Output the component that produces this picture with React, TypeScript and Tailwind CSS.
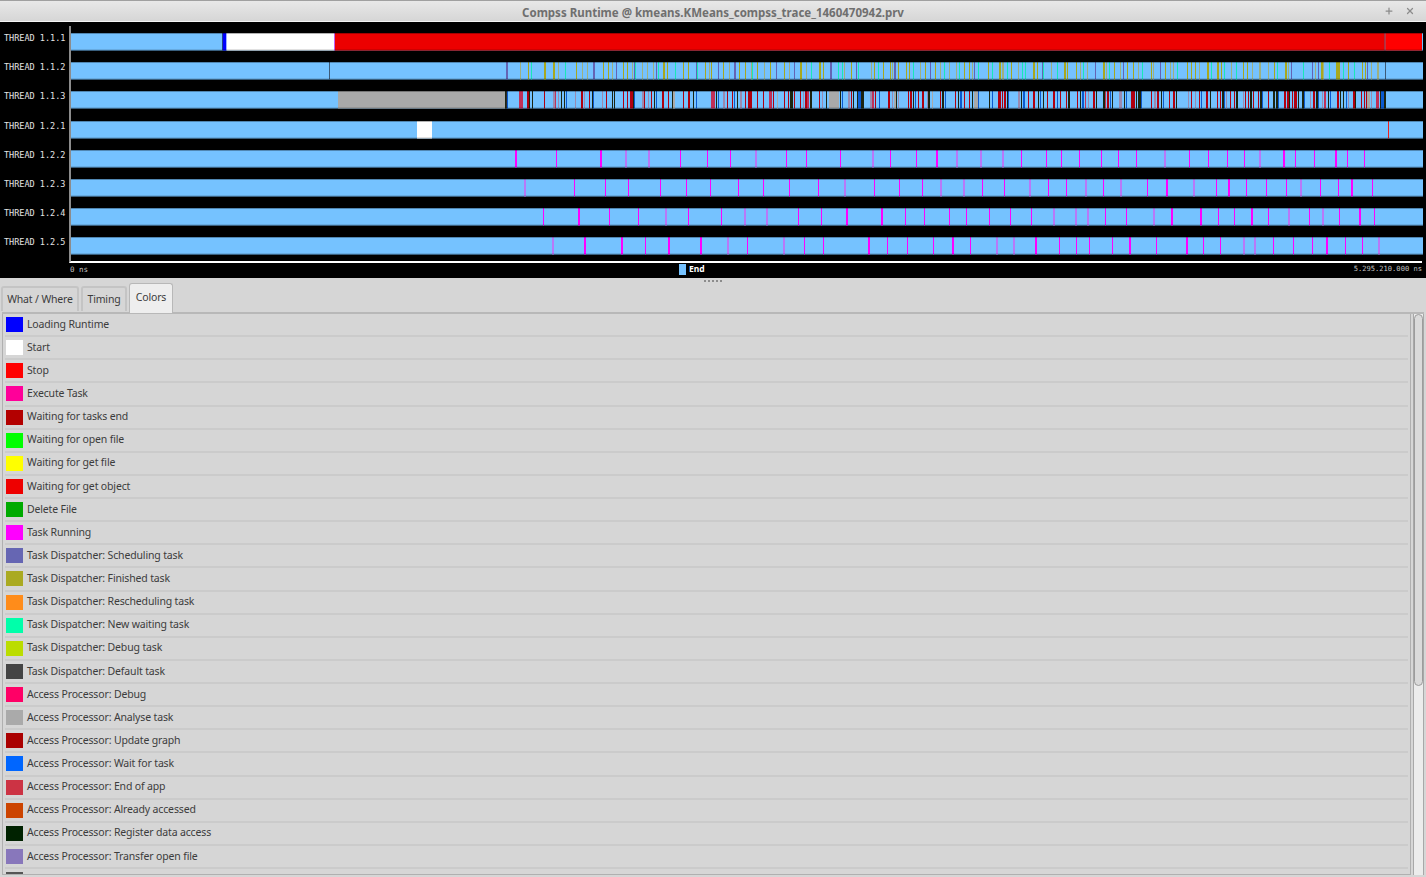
import { Plus, X } from "lucide-react";

const BLUE = "#75c2ff";

const dense: Record<string, string> = {
  P: "#6464b4",
  Y: "#a8a81e",
  S: "#9fb080",
  C: "#19e8b8",
  R: "#b00010",
  K: "#1c2410",
  B: "#0a5ad0",
  M: "#c03058",
  L: "#9a8ab0",
  G: "#a9a9a9",
};

const sched = [
  [505, "3P6 45S2 68Y3 78C2 118Y5 145Y4 158S5 180C2 212Y3 232S2 245S3 265P4 295Y3 309Y2 322S2 332P2 354Y4 366Y3 380S2 387P5 391C2 412S2 425S2 445S2 452P5 458C2 475Y4 487Y3 511C2 534Y4 548Y3 572P4 577C2 601Y3 612S2 618Y2 638P2 653Y5 672S2 688P5 703Y3 720Y4 737S3 742C2 756Y2 778S2 795Y2 814P3 838Y3 852S4 866P2 886Y5"],
  [805, "2S3 18C2 43Y4 55Y3 76P5 100C2 110C2 118S3 137Y3 152P5 160C2 197S5 207Y3 220C2 233Y3 255Y4 262S2 268P4 280Y2 303Y3 312Y2 324C2 344S2 360Y2 374P3 390Y2 405S2 418C3 432S2 452S5 463C2 478Y2 493Y3 500S2 506P5 520C2 550Y2 560C2 583Y6 592S5 605C2 618Y3 640S2 652C2 660C2 685Y4 695Y2 710P3 715C2 738S2 755C2 778Y6 785Y4 812Y3 825S4 835C2 845S3 870P2 895Y5"],
  [1105, "3S3 13C2 28Y3 45S2 55P2 65Y4 85Y3 100S2 110C3 138Y4 143S5 165P4 180Y3 195S2 205S2 217C3 245Y2 258Y3 270Y3 282S2 307Y4 317C2 337Y5 347Y3 358C2 378S3 392C2 414Y3 425Y3 440S2 463S5 490S2 508Y2 517C2 541Y4 550S3 557P2 595C3 622P3 630S4 638P2 648Y6 655S3 673C2 694Y12 713C2 730Y2 748C2 770Y3 780Y3 787P3 798S2 817S5 841P3"],
] as const;

const access = [
  [505, "0K3 6B2 43M10 67R4 73K3 80K3 117R3 145L4 150M3 160L3 168K3 176K3 182B2 210L4 227R6 237L2 252R3 260K3 265B3 292L3 303R4 320K3 328K3 355R3 365R4 374R10 384K3 388B3 412L5 418R3 430L2 438R4 448K3 452B4 472R4 490R3 500K3 505G5 535R3 550R4 565K3 572B4 617M14 632K4 640B2 655L4 665R2 680R4 688B3 695K3 705L6 720R3 730R10 755R4 775R2 792M10 804R2 815G4 838R3 848R4 856K8 866R2 884R3 895L3"],
  [805, "0R5 7M4 14K6 42R3 50L5 62K3 72G30 105K3 112B3 130L5 138R3 145K3 155K3 160B8 168K9 196L5 200M8 210R3 222B3 250R6 260L3 268G4 272K3 280L2 310R3 316R5 324K3 330B4 338R3 352R4 365L4 370K6 380G2 405R3 412K4 420B3 450R4 458K3 465B6 478R3 492R4 502K3 508G10 520B2 552K3 560B3 580R7 592R3 598R4 606K3 610B2 640L4 648K3 655B4 670R2 685R5 700K3 706B3 715K2 725R4 745R6 755B2 765R2 783R4 790K5 815R3 825K3 830B8 840M3 850L3 865R4 872K2 895K5"],
  [1105, "0M4 5R8 14B3 22K2 42L8 57K3 62B2 78R12 92K3 99K8 108B2 138R3 148L4 156R5 168K3 173B2 192R3 205R4 212K5 248L4 258R3 270L3 281R3 287B2 304R5 315K3 337R3 345R4 352K4 358B2 362L3 375R2 388R3 393K5 415L3 420R3 428R2 436K4 445R3 458R3 465K6 472B2 488R3 505K4 514K5 520B2 538R4 545R6 552K3 560R3 568R8 578K3 592K6 598B2 615L4 625R4 633K5 640B2 650L4 656M8 668K3 676B3 697R4 705K3 715K3 722B3 728L2 745R4 751K2 768R3 776R3 782R2 786G10 798L4 814M8 824K3 828B9 838K5"],
] as const;

// x positions on the page; t = thick, s = faded
const running = [
  "516.3t 556.3 601.3t 625.7s 648.7s 680.7 707 730.3 755.3s 786.3 806.7 840 872.3s 890 916.3 936.7t 956.7s 980s 1002.3s 1021.3 1046.3 1061.3 1079.3 1101.3 1118.3 1136.3 1164.3s 1189.3 1208.3 1227 1244.3 1259.3s 1284t 1295.3 1314.3 1336t 1347.3 1364.3",
  "524.3s 574.3 605.3 628.3 660 686.3 710.3 738.3 763.3 789.3 818 844s 874 899.3 922.3 940s 963s 982.3 1004.3 1029.3s 1048.3 1066.3 1085.3s 1103.3 1120s 1147.7 1167t 1193s 1216.3 1228.7t 1246.3 1266.3 1286.3 1300s 1320.3 1338 1352t 1372",
  "543 578.7t 609 638 665.7s 688.7 721.3 744s 766.7s 798.3 821.3 847t 882t 905.3 924.7 949.7 966.3 989.3 1010.3 1031.3 1053s 1075s 1087s 1105.3 1126 1153s 1172.3t 1200.7t 1218.3 1234.3 1251.7t 1268.3 1288s 1309.3 1322s 1339.3 1360.3t 1374",
  "552.3s 585t 621.7t 645.3 669t 701t 727s 747.3 783.3s 804.3 823.3 868.7t 887.3 907.3 933.3 953.3t 970.3 996s 1013s 1036.3t 1059.3 1076.3 1089.7 1112.3 1130t 1156.3 1186.7t 1203.3 1220.3 1243s 1254s 1273.3 1293.3 1312.3 1326.7t 1345.3 1362.3 1378s",
];

function Bar({ children }: { children?: React.ReactNode }) {
  return (
    <svg width="1352" height="17.6" className="block shrink-0 overflow-visible">
      <rect x="0" y="0" width="1352" height="17.6" fill={BLUE} />
      {children}
      <rect x="0" y="0" width="1352" height="1" fill="#000" opacity="0.3" />
      <rect x="0" y="16.6" width="1352" height="1" fill="#000" opacity="0.3" />
    </svg>
  );
}

const Seg = ({ from, to, color }: { from: number; to: number; color: string }) => (
  <rect x={from - 71} y="0" width={to - from} height="17.6" fill={color} />
);

function DenseTicks({ data }: { data: readonly (readonly [number, string])[] }) {
  return (
    <>
      {data.flatMap(([base, list]) =>
        list.split(" ").map((item) => {
          const m = item.match(/^(\d+)([A-Z])(\d+)$/)!;
          const from = Math.round(base + Number(m[1]) / 3);
          const to = Math.max(from + 1, Math.round(base + (Number(m[1]) + Number(m[3])) / 3));
          return <Seg key={base + item} from={from} to={to} color={dense[m[2]]} />;
        })
      )}
    </>
  );
}

function RunTicks({ list }: { list: string }) {
  return (
    <>
      {list.split(" ").map((item) => {
        const x = parseFloat(item);
        const thick = item.endsWith("t");
        const soft = item.endsWith("s");
        const from = thick ? Math.round(x - 1) : Math.floor(x);
        return (
          <Seg
            key={item}
            from={from}
            to={from + (thick || soft ? 2 : 1)}
            color={soft ? "#b878f8" : "#ff00ff"}
          />
        );
      })}
    </>
  );
}

const threads = ["1.1.1", "1.1.2", "1.1.3", "1.2.1", "1.2.2", "1.2.3", "1.2.4", "1.2.5"];

const legend: [string, string][] = [
  ["#0000ff", "Loading Runtime"],
  ["#ffffff", "Start"],
  ["#ff0000", "Stop"],
  ["#ff0099", "Execute Task"],
  ["#b30000", "Waiting for tasks end"],
  ["#00ff00", "Waiting for open file"],
  ["#ffff00", "Waiting for get file"],
  ["#ee0000", "Waiting for get object"],
  ["#00aa00", "Delete File"],
  ["#ff00ff", "Task Running"],
  ["#6666b3", "Task Dispatcher: Scheduling task"],
  ["#aaaa22", "Task Dispatcher: Finished task"],
  ["#ff8c1a", "Task Dispatcher: Rescheduling task"],
  ["#00ffaa", "Task Dispatcher: New waiting task"],
  ["#bbdd00", "Task Dispatcher: Debug task"],
  ["#444444", "Task Dispatcher: Default task"],
  ["#ff0066", "Access Processor: Debug"],
  ["#aaaaaa", "Access Processor: Analyse task"],
  ["#aa0000", "Access Processor: Update graph"],
  ["#0066ff", "Access Processor: Wait for task"],
  ["#cc3344", "Access Processor: End of app"],
  ["#cc4400", "Access Processor: Already accessed"],
  ["#002200", "Access Processor: Register data access"],
  ["#8877bb", "Access Processor: Transfer open file"],
  ["#555555", ""],
];

export default function App() {
  return (
    <div className="w-[1426px] h-[877px] overflow-hidden flex flex-col bg-[#d6d6d6] font-['Noto_Sans',sans-serif]">
      {/* Window title */}
      <div className="h-[22px] shrink-0 relative flex items-center justify-center pt-[3px] border-t border-[#a0a0a0] border-b border-b-[#f4f4f4] bg-gradient-to-b from-[#e8e8e8] to-[#d6d6d6]">
        <span className="text-[11.5px] font-bold text-[#6f6f6f]">
          Compss Runtime @ kmeans.KMeans_compss_trace_1460470942.prv
        </span>
        <div className="absolute right-[11px] top-[5px] flex gap-[11px] text-[#8c8c8c]">
          <Plus size={10} strokeWidth={3} />
          <X size={10} strokeWidth={3} />
        </div>
      </div>

      {/* Timeline */}
      <div className="h-[256px] shrink-0 bg-black flex flex-col font-['DejaVu_Sans_Mono',monospace]">
        <div className="h-[241px] shrink-0 pt-[4px] flex">
          <div className="w-[69px] pt-[7px] flex flex-col gap-[11.6px] text-[8.5px] text-[#e4e4e4]">
            {threads.map((t) => (
              <div key={t} className="h-[17.6px] pl-[4px] leading-[10px] whitespace-pre">
                THREAD {t}
              </div>
            ))}
          </div>
          <div className="w-[1353px] pt-[7px] flex flex-col gap-[11.6px] border-l-2 border-l-[#8c8c8c] border-b-2 border-b-white">
            <Bar>
              <Seg from={222} to={223} color="#24408c" />
              <Seg from={223} to={226.5} color="#0000ff" />
              <Seg from={226.5} to={334} color="#ffffff" />
              <Seg from={334} to={335} color="#c060f0" />
              <Seg from={335} to={1384.5} color="#ec0000" />
              <Seg from={1384.5} to={1385.5} color="#a00000" />
              <Seg from={1385.5} to={1422} color="#ff0000" />
            </Bar>
            <Bar>
              <Seg from={329} to={330} color="#3c5a78" />
              <DenseTicks data={sched} />
              <Seg from={1385} to={1386} color="#3c5a78" />
            </Bar>
            <Bar>
              <Seg from={338} to={505.5} color="#a9a9a9" />
              <Seg from={505.5} to={507} color="#2a2a2a" />
              <DenseTicks data={access} />
            </Bar>
            <Bar>
              <Seg from={417} to={432} color="#ffffff" />
              <Seg from={1388} to={1389} color="#ee2020" />
            </Bar>
            {running.map((list) => (
              <Bar key={list}>
                <RunTicks list={list} />
              </Bar>
            ))}
          </div>
        </div>
        <div className="flex-1 flex items-center text-[7.1px] text-[#c4c4c4] pb-[3px]">
          <span className="w-[679px] pl-[70px] text-[7.5px]">0 ns</span>
          <span className="w-[7px] h-[11px] bg-[#75c2ff]" />
          <span className="ml-[3px] text-[8.5px] font-bold text-white font-['Noto_Sans',sans-serif]">End</span>
          <span className="ml-auto pr-[4px]">5.295.210.000 ns</span>
        </div>
      </div>

      {/* Splitter */}
      <div className="h-[5px] shrink-0 flex items-center justify-center gap-[2px]">
        {[0, 1, 2, 3, 4].map((i) => (
          <span key={i} className="w-[2px] h-[2px] bg-[#8c8c8c]" />
        ))}
      </div>

      {/* Tabs */}
      <div className="h-[29px] shrink-0 flex items-start pl-[1px] gap-[2px] text-[10.5px] tracking-[-0.15px] text-[#3c3c3c] relative z-10">
        <div className="mt-[3px] h-[25px] w-[78px] flex items-center justify-center border-2 border-b-0 border-[#c4c4c4] rounded-t-[3px] bg-[#d6d6d6]">
          What / Where
        </div>
        <div className="mt-[3px] h-[25px] w-[46px] flex items-center justify-center border-2 border-b-0 border-[#c4c4c4] rounded-t-[3px] bg-[#d6d6d6]">
          Timing
        </div>
        <div className="h-[30px] w-[44px] pb-[2px] flex items-center justify-center border border-b-0 border-[#b8b8b8] rounded-t-[3px] bg-[#eeeeee]">
          Colors
        </div>
      </div>

      {/* Colors panel */}
      <div className="flex-1 min-h-0 mb-[2px] ml-[2px] mr-[2px] flex gap-[2px] border-t-2 border-t-[#b8b8b8]">
        <div className="w-[1409px] pl-[2px] overflow-hidden border-l border-r border-b border-[#b0b0b0] text-[10.5px] tracking-[-0.15px] text-[#3c3c3c]">
          {legend.map(([color, label]) => (
            <div key={color + label} className="h-[23.13px] pr-[2px]">
              <div className="h-full flex items-center gap-[4px] pl-[1px] border-b-2 border-[#cbcbcb]">
                <span className="w-[17px] h-[15px] shrink-0" style={{ backgroundColor: color }} />
                <span>{label}</span>
              </div>
            </div>
          ))}
        </div>
        <div className="w-[11px] bg-[#ececec] border-x border-[#a8a8a8]">
          <div className="h-[372px] bg-[#dadada] border border-[#9c9c9c] rounded-[5px]" />
        </div>
      </div>
    </div>
  );
}
